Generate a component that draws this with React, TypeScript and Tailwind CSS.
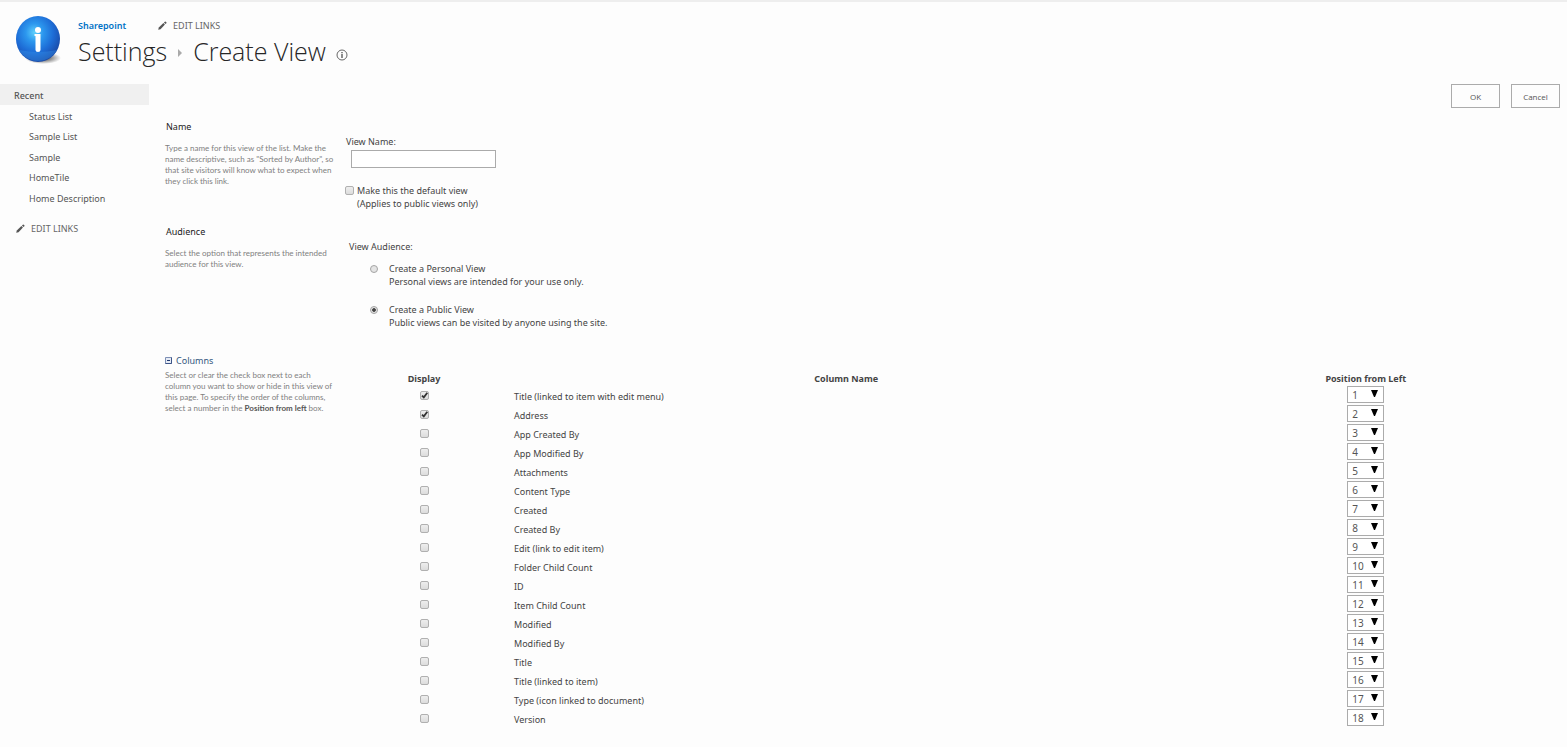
import { useState } from "react";
import type { ReactNode } from "react";

const recentLinks = [
  "Status List",
  "Sample List",
  "Sample",
  "HomeTile",
  "Home Description",
];

const columns = [
  { name: "Title (linked to item with edit menu)", display: true },
  { name: "Address", display: true },
  { name: "App Created By", display: false },
  { name: "App Modified By", display: false },
  { name: "Attachments", display: false },
  { name: "Content Type", display: false },
  { name: "Created", display: false },
  { name: "Created By", display: false },
  { name: "Edit (link to edit item)", display: false },
  { name: "Folder Child Count", display: false },
  { name: "ID", display: false },
  { name: "Item Child Count", display: false },
  { name: "Modified", display: false },
  { name: "Modified By", display: false },
  { name: "Title", display: false },
  { name: "Title (linked to item)", display: false },
  { name: "Type (icon linked to document)", display: false },
  { name: "Version", display: false },
];

function Logo() {
  return (
    <svg viewBox="0 0 48 50" className="h-[50px] w-12 shrink-0" aria-hidden="true">
      <defs>
        <radialGradient id="ball" cx="0.42" cy="0.36" r="0.66">
          <stop offset="0" stopColor="#5fd0fb" />
          <stop offset="0.3" stopColor="#2c97ee" />
          <stop offset="0.65" stopColor="#1d6cd6" />
          <stop offset="1" stopColor="#1a48a4" />
        </radialGradient>
        <radialGradient id="shadow">
          <stop offset="0" stopColor="#000" stopOpacity="0.8" />
          <stop offset="1" stopColor="#000" stopOpacity="0" />
        </radialGradient>
      </defs>
      <ellipse cx="29" cy="43" rx="18" ry="6" fill="url(#shadow)" />
      <ellipse cx="24" cy="24" rx="22" ry="23" fill="url(#ball)" />
      <path d="M5 35 Q24 39 43 35 A22 22 0 0 1 5 35Z" fill="#3a9af0" opacity="0.35" />
      <circle cx="24" cy="15" r="3" fill="#fff" />
      <path d="M20.5 19 H26.5 V35 Q26.5 37 24 37 Q21.5 37 21.5 35 V21 H20.5Z" fill="#fff" />
    </svg>
  );
}

function Pencil() {
  return (
    <svg viewBox="0 0 10 10" className="size-[9px] shrink-0" fill="#555" aria-hidden="true">
      <path d="M0.2 9.8 L0.9 7.2 L6 2.3 L7.7 4 L2.8 9.1Z" />
      <path d="M6.6 1.7 L7.6 0.7 Q8.1 0.3 8.6 0.7 L9.3 1.4 Q9.7 1.9 9.3 2.4 L8.3 3.4Z" />
    </svg>
  );
}

function EditLinks() {
  return (
    <a href="#edit-links" className="flex items-center gap-[6px] text-[#666]">
      <Pencil />
      EDIT LINKS
    </a>
  );
}

type CheckboxProps = { id: string; checked?: boolean; label?: string };

function Checkbox({ id, checked = false, label }: CheckboxProps) {
  const [on, setOn] = useState(checked);

  return (
    <span className="relative block size-[9px] shrink-0">
      <input
        id={id}
        type="checkbox"
        aria-label={label}
        checked={on}
        onChange={() => setOn(!on)}
        className="block size-[9px] appearance-none rounded-[2px] border border-[#b0b0b0] bg-linear-to-b from-[#eee] to-[#dcdcdc]"
      />
      {on && (
        <svg viewBox="0 0 9 9" className="pointer-events-none absolute inset-0 size-[9px]" aria-hidden="true">
          <path d="M2 4.6 L3.8 6.4 L7.3 1.8" fill="none" stroke="#333" strokeWidth="1.8" />
        </svg>
      )}
    </span>
  );
}

type RadioProps = { id: string; title: string; text: string; checked?: boolean };

function Radio({ id, title, text, checked }: RadioProps) {
  return (
    <div className="flex items-start gap-[11px]">
      <input
        id={id}
        type="radio"
        name="audience"
        defaultChecked={checked}
        className="mt-[3px] size-2 shrink-0 appearance-none rounded-full border border-[#a5a5a5] bg-[#e4e4e4] checked:bg-[radial-gradient(circle,#444_35%,#e4e4e4_52%)]"
      />
      <label htmlFor={id}>
        {title}
        <br />
        {text}
      </label>
    </div>
  );
}

function Description({ children }: { children: ReactNode }) {
  return (
    <p className="font-[Lato,sans-serif] text-[8px] leading-[11px] whitespace-nowrap text-[#808080]">
      {children}
    </p>
  );
}

function PositionSelect({ position, name }: { position: number; name: string }) {
  return (
    <span className="relative mx-auto block h-[17px] w-[37px]">
      <select
        aria-label={`Position of ${name}`}
        defaultValue={position}
        className="block h-[17px] w-full appearance-none border border-[#ababab] bg-white pt-px pl-1 text-[10px] leading-[15px] text-[#555]"
      >
        {columns.map((_, i) => (
          <option key={i} value={i + 1}>
            {i + 1}
          </option>
        ))}
      </select>
      <svg
        viewBox="0 0 7 7"
        className="pointer-events-none absolute top-1 right-[6px] size-[7px]"
        aria-hidden="true"
      >
        <path d="M0 0 H7 L4 7 H3Z" />
      </svg>
    </span>
  );
}

function Header() {
  return (
    <header className="flex h-[82px] items-start pt-[13px] pl-[14px]">
      <Logo />
      <div className="pt-[3px] pl-4">
        <div className="flex h-[14px] items-center gap-8">
          <a href="#sharepoint" className="font-semibold text-[#0072c6]">
            Sharepoint
          </a>
          <EditLinks />
        </div>
        <h1 className="flex items-center pt-px font-['Open_Sans',sans-serif] text-[25px] leading-9 font-light text-[#262626]">
          <a href="#settings">Settings</a>
          <svg viewBox="0 0 4 8" className="mx-[11px] mt-1 h-2 w-1" fill="#aaa" aria-hidden="true">
            <path d="M0 0 L4 4 L0 8Z" />
          </svg>
          Create View
          <svg viewBox="0 0 12 12" className="mt-2 ml-[10px] size-3" fill="none" stroke="#666" aria-hidden="true">
            <circle cx="6" cy="6" r="5" />
            <path d="M6 5 V9 M6 3 V4.2" strokeWidth="1.5" />
          </svg>
        </h1>
      </div>
    </header>
  );
}

function Sidebar() {
  return (
    <nav className="w-[149px] shrink-0 text-[#555]">
      <h2 className="h-[21px] bg-[#f0f0f0] pt-[5px] pl-[14px] font-medium">Recent</h2>
      <ul className="flex flex-col pt-[5px] pl-[29px]">
        {recentLinks.map((link) => (
          <li key={link} className="pb-2 leading-3 odd:leading-[13px]">
            <a href="#list">{link}</a>
          </li>
        ))}
      </ul>
      <div className="pt-[9px] pl-4">
        <EditLinks />
      </div>
    </nav>
  );
}

export default function App() {
  const buttonClass =
    "h-6 w-[49px] border border-[#ababab] bg-[#fdfdfd] font-['Open_Sans',sans-serif] text-[8px] text-[#555]";

  return (
    <div className="min-h-screen border-t-2 border-[#eee] bg-[#fdfdfd] font-['Noto_Sans',sans-serif] text-[9px] leading-[13px] text-[#444]">
      <Header />

      <div className="flex">
        <Sidebar />

        <main className="min-w-0 flex-1 pl-4">
          <div className="flex justify-end gap-[11px] pr-[7px]">
            <button type="button" className={buttonClass}>
              OK
            </button>
            <button type="button" className={buttonClass}>
              Cancel
            </button>
          </div>

          <section className="flex pt-3">
            <div className="w-[180px] shrink-0">
              <h2 className="pb-[10px] pl-px text-[#222]">Name</h2>
              <Description>
                Type a name for this view of the list. Make the
                <br />
                name descriptive, such as "Sorted by Author", so
                <br />
                that site visitors will know what to expect when
                <br />
                they click this link.
              </Description>
            </div>
            <div className="pt-[15px]">
              <label htmlFor="view-name" className="block pl-px">
                View Name:
              </label>
              <input
                id="view-name"
                type="text"
                className="mt-[2px] ml-[6px] block h-[18px] w-[145px] border border-[#ababab] bg-white px-1"
              />
              <div className="flex gap-[3px] pt-4">
                <span className="pt-[2px]">
                  <Checkbox id="default-view" />
                </span>
                <label htmlFor="default-view">
                  Make this the default view
                  <br />
                  (Applies to public views only)
                </label>
              </div>
            </div>
          </section>

          <section className="flex pt-[15px]">
            <div className="w-[180px] shrink-0">
              <h2 className="pb-[10px] pl-px text-[#222]">Audience</h2>
              <Description>
                Select the option that represents the intended
                <br />
                audience for this view.
              </Description>
            </div>
            <fieldset aria-labelledby="audience-label" className="pt-[15px] pl-1">
              <p id="audience-label">View Audience:</p>
              <div className="flex flex-col gap-[15px] pt-[9px] pl-[21px]">
                <Radio
                  id="personal"
                  title="Create a Personal View"
                  text="Personal views are intended for your use only."
                />
                <Radio
                  id="public"
                  title="Create a Public View"
                  text="Public views can be visited by anyone using the site."
                  checked
                />
              </div>
            </fieldset>
          </section>

          <section className="flex pt-[25px] pr-7">
            <div className="w-[179px] shrink-0">
              <h2 className="pb-[3px]">
                <button type="button" className="flex items-center gap-1 text-[#33587f]">
                  <svg viewBox="0 0 7 7" className="size-[7px]" fill="none" aria-hidden="true">
                    <path d="M0.5 0.5 H6.5 V6.5 H0.5Z" fill="#e6ebf5" stroke="#7d8fb5" />
                    <path d="M0.5 6.5 H6.5 V0.5" stroke="#3d5588" />
                    <path d="M2 3.5 H5" stroke="#223a70" />
                  </svg>
                  Columns
                </button>
              </h2>
              <Description>
                Select or clear the check box next to each
                <br />
                column you want to show or hide in this view of
                <br />
                this page. To specify the order of the columns,
                <br />
                select a number in the <b className="text-[#555]">Position from left</b> box.
              </Description>
            </div>
            <table className="mt-[17px] w-full table-fixed">
              <thead>
                <tr className="h-[14px]">
                  <th className="w-[160px]">Display</th>
                  <th className="pr-1">Column Name</th>
                  <th className="w-[29%]">Position from Left</th>
                </tr>
              </thead>
              <tbody>
                {columns.map((column, i) => (
                  <tr key={column.name} className="h-[19px]">
                    <td>
                      <div className="flex justify-center pt-px">
                        <Checkbox id={`column-${i}`} checked={column.display} label={column.name} />
                      </div>
                    </td>
                    <td className="pt-[3px] pl-[10px]">
                      <label htmlFor={`column-${i}`}>{column.name}</label>
                    </td>
                    <td>
                      <PositionSelect position={i + 1} name={column.name} />
                    </td>
                  </tr>
                ))}
              </tbody>
            </table>
          </section>
        </main>
      </div>
    </div>
  );
}
